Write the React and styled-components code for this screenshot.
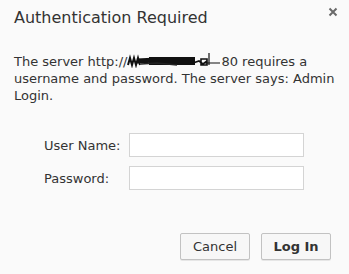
import React from "react";
import styled, { createGlobalStyle } from "styled-components";

const Global = createGlobalStyle`
  html, body { margin: 0; padding: 0; background: #fafafa; }
  body { font-family: "DejaVu Sans", "Liberation Sans", sans-serif; color: #333; }
`;

const Dialog = styled.div`
  width: 349px;
  height: 274px;
  box-sizing: border-box;
  background: #fafafa;
  display: flex;
  flex-direction: column;
  padding: 8px 18px 0 14px;
`;

const Header = styled.div`
  display: flex;
  justify-content: space-between;
  align-items: flex-start;
`;

const Title = styled.h1`
  margin: 0;
  font-size: 16px;
  font-weight: normal;
  line-height: 19px;
  color: #333;
`;

const Close = styled.button`
  border: 0;
  background: none;
  padding: 0;
  margin: -1px -7px 0 0;
  width: 10px;
  height: 10px;
  display: flex;
  cursor: pointer;
`;

const Message = styled.p`
  margin: 26px -12px 0 0;
  font-size: 13px;
  line-height: 17px;
  color: #333;
`;

const Redacted = styled.span`
  display: inline-block;
  vertical-align: -2px;
  width: 94px;
  height: 15px;
`;

const Form = styled.div`
  display: grid;
  grid-template-columns: 85px 175px;
  row-gap: 9px;
  margin: 29px 0 0 30px;
  align-items: center;
`;

const Label = styled.label`
  font-size: 13px;
  color: #333;
`;

const Input = styled.input`
  box-sizing: border-box;
  width: 175px;
  height: 24px;
  border: 1px solid #d4d4d4;
  background: #fff;
  margin: 0;
  padding: 0 4px;
  outline: none;
`;

const Buttons = styled.div`
  display: flex;
  justify-content: flex-end;
  gap: 11px;
  margin-top: 43px;
`;

const Button = styled.button`
  box-sizing: border-box;
  width: 70px;
  height: 27px;
  border: 1px solid #c2c2c2;
  border-radius: 2px;
  background: #f7f7f7;
  box-shadow: 0 1px 0 rgba(0, 0, 0, 0.08);
  font-family: "DejaVu Sans", "Liberation Sans", sans-serif;
  font-size: 13px;
  font-weight: ${(p) => (p.$primary ? "bold" : "normal")};
  color: #333;
  padding: 0;
`;

export default function App() {
  return (
    <Dialog>
      <Global />
      <Header>
        <Title>Authentication Required</Title>
        <Close aria-label="Close">
          <svg width="10" height="10" viewBox="0 0 10 10">
            <path d="M1.5 1.5 L8.5 8.5 M8.5 1.5 L1.5 8.5" stroke="#6a6a6a" strokeWidth="2" />
          </svg>
        </Close>
      </Header>
      <Message>
        The server http://
        <Redacted>
          <svg width="94" height="15" viewBox="0 0 94 15">
            <path d="M1 12 L3 5 L5 12 L7 5 L9 12 L11 5 L13 12" stroke="#111" strokeWidth="2" fill="none" />
            <path d="M10 8 L30 7 L50 8" stroke="#111" strokeWidth="5" fill="none" />
            <rect x="22" y="4" width="46" height="8" fill="#111" />
            <path d="M14 11 L30 10 L50 12" stroke="#222" strokeWidth="1.5" fill="none" />
            <path d="M66 10 L72 8 L76 11 L80 8 M74 6 L80 6 L80 12 L74 12 Z" stroke="#111" strokeWidth="1.6" fill="none" />
            <path d="M82 0 L82 12 M78 10 L93 10" stroke="#111" strokeWidth="1.2" />
          </svg>
        </Redacted>
        80 requires a username and password. The server says: Admin Login.
      </Message>
      <Form>
        <Label htmlFor="u">User Name:</Label>
        <Input id="u" type="text" />
        <Label htmlFor="p">Password:</Label>
        <Input id="p" type="password" />
      </Form>
      <Buttons>
        <Button>Cancel</Button>
        <Button $primary>Log In</Button>
      </Buttons>
    </Dialog>
  );
}
